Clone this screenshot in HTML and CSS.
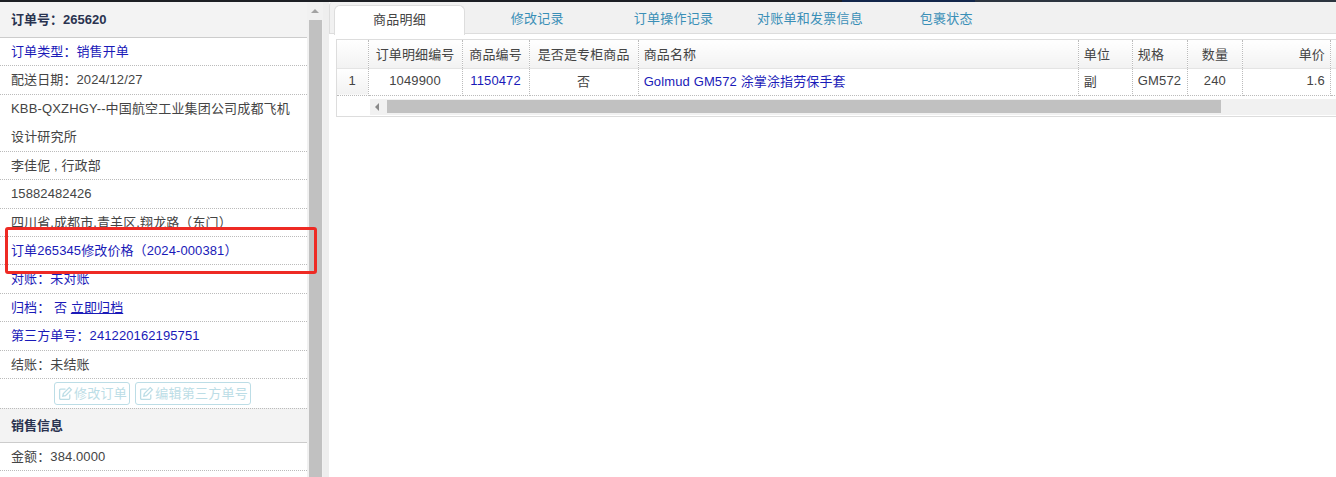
FILE: index.html
```html
<!DOCTYPE html>
<html lang="zh">
<head>
<meta charset="utf-8">
<title>订单详情</title>
<link rel="stylesheet" href="styles.css">
</head>
<body>
<div class="topbar"></div>
<div class="layout">
  <aside class="side">
    <div class="side-list">
      <div class="head">订单号：265620</div>
      <div class="row blue">订单类型：销售开单</div>
      <div class="row">配送日期：2024/12/27</div>
      <div class="row wrap">KBB-QXZHGY--中国航空工业集团公司成都飞机设计研究所</div>
      <div class="row">李佳伲 , 行政部</div>
      <div class="row">15882482426</div>
      <div class="row">四川省,成都市,青羊区,翔龙路（东门）</div>
      <div class="row blue">订单265345修改价格（2024-000381）</div>
      <div class="row blue">对账：未对账</div>
      <div class="row blue">归档： 否 <a class="link" href="#">立即归档</a></div>
      <div class="row blue">第三方单号：241220162195751</div>
      <div class="row">结账：未结账</div>
      <div class="row actions">
        <button class="btn" type="button"><svg class="ico" viewBox="0 0 14 14"><path d="M11 8v3.500a1 1 0 0 1-1 1H2.500a1 1 0 0 1-1-1V4a1 1 0 0 1 1-1H7"/><path d="M5 7l-.5 2.500L7 9l5.500-5.500-2-2z"/></svg>修改订单</button>
        <button class="btn" type="button"><svg class="ico" viewBox="0 0 14 14"><path d="M11 8v3.500a1 1 0 0 1-1 1H2.500a1 1 0 0 1-1-1V4a1 1 0 0 1 1-1H7"/><path d="M5 7l-.5 2.500L7 9l5.500-5.500-2-2z"/></svg>编辑第三方单号</button>
      </div>
      <div class="head sub">销售信息</div>
      <div class="row">金额：384.0000</div>
    </div>
    <div class="vscroll"><span class="vup"></span><span class="vthumb"></span></div>
  </aside>
  <main class="main">
    <nav class="tabs">
      <span class="tab active">商品明细</span>
      <span class="tab">修改记录</span>
      <span class="tab">订单操作记录</span>
      <span class="tab">对账单和发票信息</span>
      <span class="tab">包裹状态</span>
    </nav>
    <div class="grid">
      <table class="table">
        <colgroup>
          <col class="c0"><col class="c1"><col class="c2"><col class="c3"><col class="c4"><col class="c5"><col class="c6"><col class="c7"><col class="c8"><col class="c9">
        </colgroup>
        <thead>
          <tr>
            <th></th><th>订单明细编号</th><th>商品编号</th><th>是否是专柜商品</th><th class="l">商品名称</th><th class="l">单位</th><th class="l">规格</th><th>数量</th><th class="r">单价</th><th></th>
          </tr>
        </thead>
        <tbody>
          <tr>
            <td class="num">1</td><td>1049900</td><td class="bl">1150472</td><td>否</td><td class="l bl">Golmud GM572 涂掌涂指劳保手套</td><td class="l">副</td><td class="l">GM572</td><td>240</td><td class="r">1.6</td><td></td>
          </tr>
        </tbody>
      </table>
      <div class="hscroll"><span class="hleft"></span><span class="hthumb"></span></div>
    </div>
  </main>
</div>
<div class="mark"></div>
</body>
</html>
```
FILE: styles.css
```css
* { box-sizing: border-box; }
html, body { margin: 0; height: 100%; overflow: hidden; background: #fff; }
body { font-family: "Liberation Sans", "Noto Sans CJK SC", sans-serif; font-size: 13px; color: #444; display: flex; flex-direction: column; position: relative; }
.topbar { height: 2px; flex: none; background: linear-gradient(90deg, #1c1f24 0 842px, #12264a 842px 975px, #2c3540 975px); }
.layout { display: flex; flex: 1; min-height: 0; }
.side { width: 323px; flex: none; display: flex; }
.side-list { width: 307px; flex: none; }
.head { height: 36px; background: #f3f3f3; border-bottom: 1px solid #ccc; padding: 0 11px; line-height: 35px; font-weight: bold; color: #2a3350; }
.head.sub { height: 35px; line-height: 34px; border-top: 1px dotted #bbb; }
.row { min-height: 28.4px; line-height: 27.4px; padding: 0 6px 0 11px; border-bottom: 1px dotted #bbb; letter-spacing: .1px; }
.wrap { line-height: 28px; letter-spacing: .16px; }
.blue { color: #1a1ab8; }
.link { color: inherit; text-decoration: underline; }
.actions { display: flex; justify-content: center; gap: 5px; align-items: center; border-bottom: 0; height: 29px; padding: 0 2px 0 0; letter-spacing: .25px; }
.btn { height: 23px; padding: 0 2px 0 3px; display: inline-flex; align-items: center; gap: 1px; background: #fff; border: 1px solid #bcdde6; border-radius: 3px; color: #bcdde6; font: inherit; letter-spacing: inherit; }
.ico { width: 15px; height: 15px; fill: none; stroke: #bcdde6; stroke-width: 1.2; }
.vscroll { width: 16px; flex: none; background: #f1f1f1; display: flex; flex-direction: column; align-items: center; }
.vup { height: 18px; flex: none; position: relative; width: 100%; }
.vup::after { content: ""; position: absolute; left: 4px; top: 7px; border: 4px solid transparent; border-top: 0; border-bottom: 4px solid #a3a3a3; }
.vthumb { flex: 1; width: 13px; background: #c1c1c1; }
.main { flex: 1; min-width: 0; position: relative; }
.main::before { content: ""; position: absolute; left: 0; top: 0; bottom: 0; width: 6px; background: #eee; }
.tabs { height: 32px; margin-left: 6px; background: #f1f1f1; border-bottom: 1px solid #ddd; border-left: 1px solid #ddd; border-radius: 4px 0 0 0; display: flex; padding: 3px 0 0 4px; letter-spacing: .25px; }
.tab { width: 136.4px; height: 30px; line-height: 27px; text-align: center; color: #3a8fb7; }
.tab.active { width: 131px; background: #fff; border: 1px solid #ddd; border-bottom: 0; border-radius: 6px 6px 0 0; color: #444; margin-right: 4px; }
.grid { margin: 5px 0 0 13px; height: 78px; border: 1px solid #ddd; border-right: 0; overflow: hidden; }
.table { width: 1000px; table-layout: fixed; border-collapse: collapse; letter-spacing: .13px; }
.c0 { width: 31px; } .c1 { width: 94px; } .c2 { width: 67px; } .c3 { width: 109px; } .c4 { width: 440px; } .c5 { width: 54px; } .c6 { width: 55px; } .c7 { width: 55px; } .c8 { width: 88px; } .c9 { width: 6px; }
th, td { text-align: center; padding: 0 5px; border-right: 1px dotted #bbb; font-weight: normal; white-space: nowrap; overflow: hidden; }
th { height: 28px; background: linear-gradient(#fff, #f2f2f2); border-bottom: 1px solid #e4e4e4; }
td { height: 27px; padding-bottom: 2px; border-bottom: 1px dotted #bbb; }
.l { text-align: left; }
.r { text-align: right; }
.bl { color: #1a1ab8; }
.num { background: linear-gradient(#fff, #f2f2f2); }
.hscroll { margin: 3px 0 0 33px; height: 16px; background: #f1f1f1; display: flex; align-items: center; }
.hleft { width: 17px; height: 100%; flex: none; position: relative; }
.hleft::after { content: ""; position: absolute; left: 5px; top: 4px; border: 4px solid transparent; border-left: 0; border-right: 4px solid #8a8a8a; }
.hthumb { width: 834px; height: 13px; background: #c1c1c1; }
.mark { position: absolute; left: 5px; top: 227px; width: 312px; height: 47px; border: 3px solid #ee2a24; border-radius: 3px; }
```
